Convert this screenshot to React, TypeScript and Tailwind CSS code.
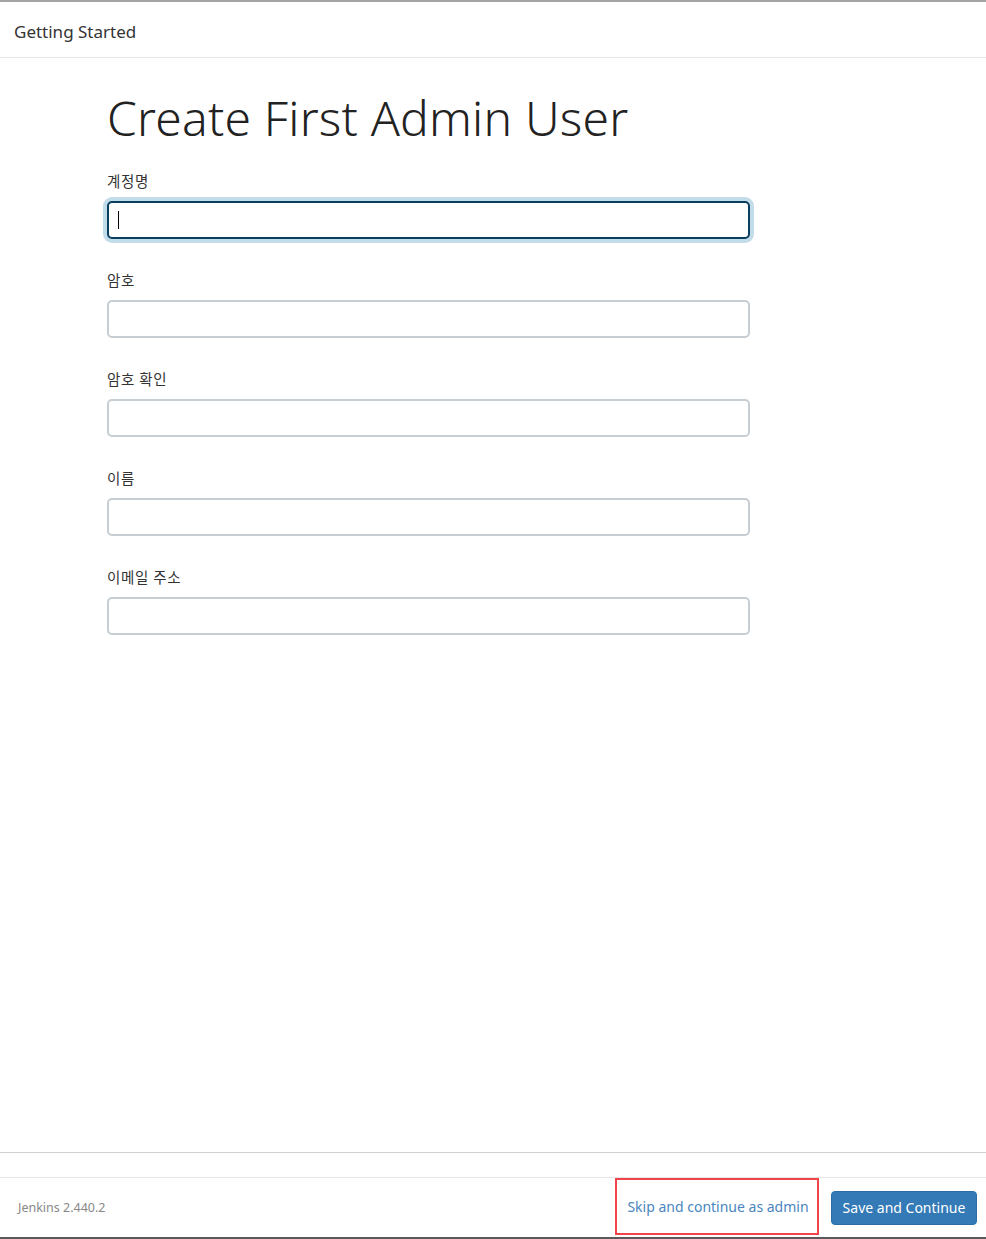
import React from "react";

const font = { fontFamily: '"Noto Sans", "Noto Sans CJK KR", sans-serif' };

function Field({ label, focused }: { label: string; focused?: boolean }) {
  return (
    <div className="flex flex-col">
      <label className="text-[14.5px] tracking-[0.6px] leading-[20px] text-[#333] h-[20px] mb-[10px]">{label}</label>
      {focused ? (
        <div className="w-[643px] h-[38px] rounded-[5px] border-2 border-[#0b3f5f] ring-4 ring-[#c3dcea] bg-white flex items-center pl-[9px]">
          <div className="w-px h-[18px] bg-black" />
        </div>
      ) : (
        <div className="w-[643px] h-[38px] rounded-[5px] border-2 border-[#c6ced3] bg-white" />
      )}
    </div>
  );
}

export default function App() {
  return (
    <div style={font} className="w-[986px] h-[1239px] bg-white flex flex-col border-t-2 border-[#a3a3a3] border-b-2 border-b-[#5a5a5a] overflow-hidden">
      <div className="h-[56px] border-b border-[#e5e5e5] flex items-center pl-[14px] pt-[4px] shrink-0">
        <span className="text-[17px] text-[#333] leading-none">Getting Started</span>
      </div>
      <div className="flex-1 pl-[107px] pt-[25px]">
        <h1 className="text-[48px] leading-[70px] font-light text-[#222] tracking-[0.2px] mb-[18px]">Create First Admin User</h1>
        <div className="flex flex-col gap-[31px]">
          <Field label="계정명" focused />
          <Field label="암호" />
          <Field label="암호 확인" />
          <Field label="이름" />
          <Field label="이메일 주소" />
        </div>
      </div>
      <div className="h-[25px] border-t border-[#cfcfcf] shrink-0" />
      <div className="h-[60px] border-t border-[#e5e5e5] flex items-center shrink-0 pr-[9px]">
        <span className="pl-[18px] text-[12.5px] text-[#888] flex-1 pt-[2px]">Jenkins 2.440.2</span>
        <div className="w-[204px] h-[57px] border-2 border-[#f0434a] flex items-center justify-center mr-[12px] self-start">
          <span className="text-[14px] text-[#4a86c0] pl-[2px]">Skip and continue as admin</span>
        </div>
        <button className="w-[146px] h-[34px] rounded-[4px] bg-[#337ab7] border border-[#2e6da4] text-white text-[14px]">Save and Continue</button>
      </div>
    </div>
  );
}
